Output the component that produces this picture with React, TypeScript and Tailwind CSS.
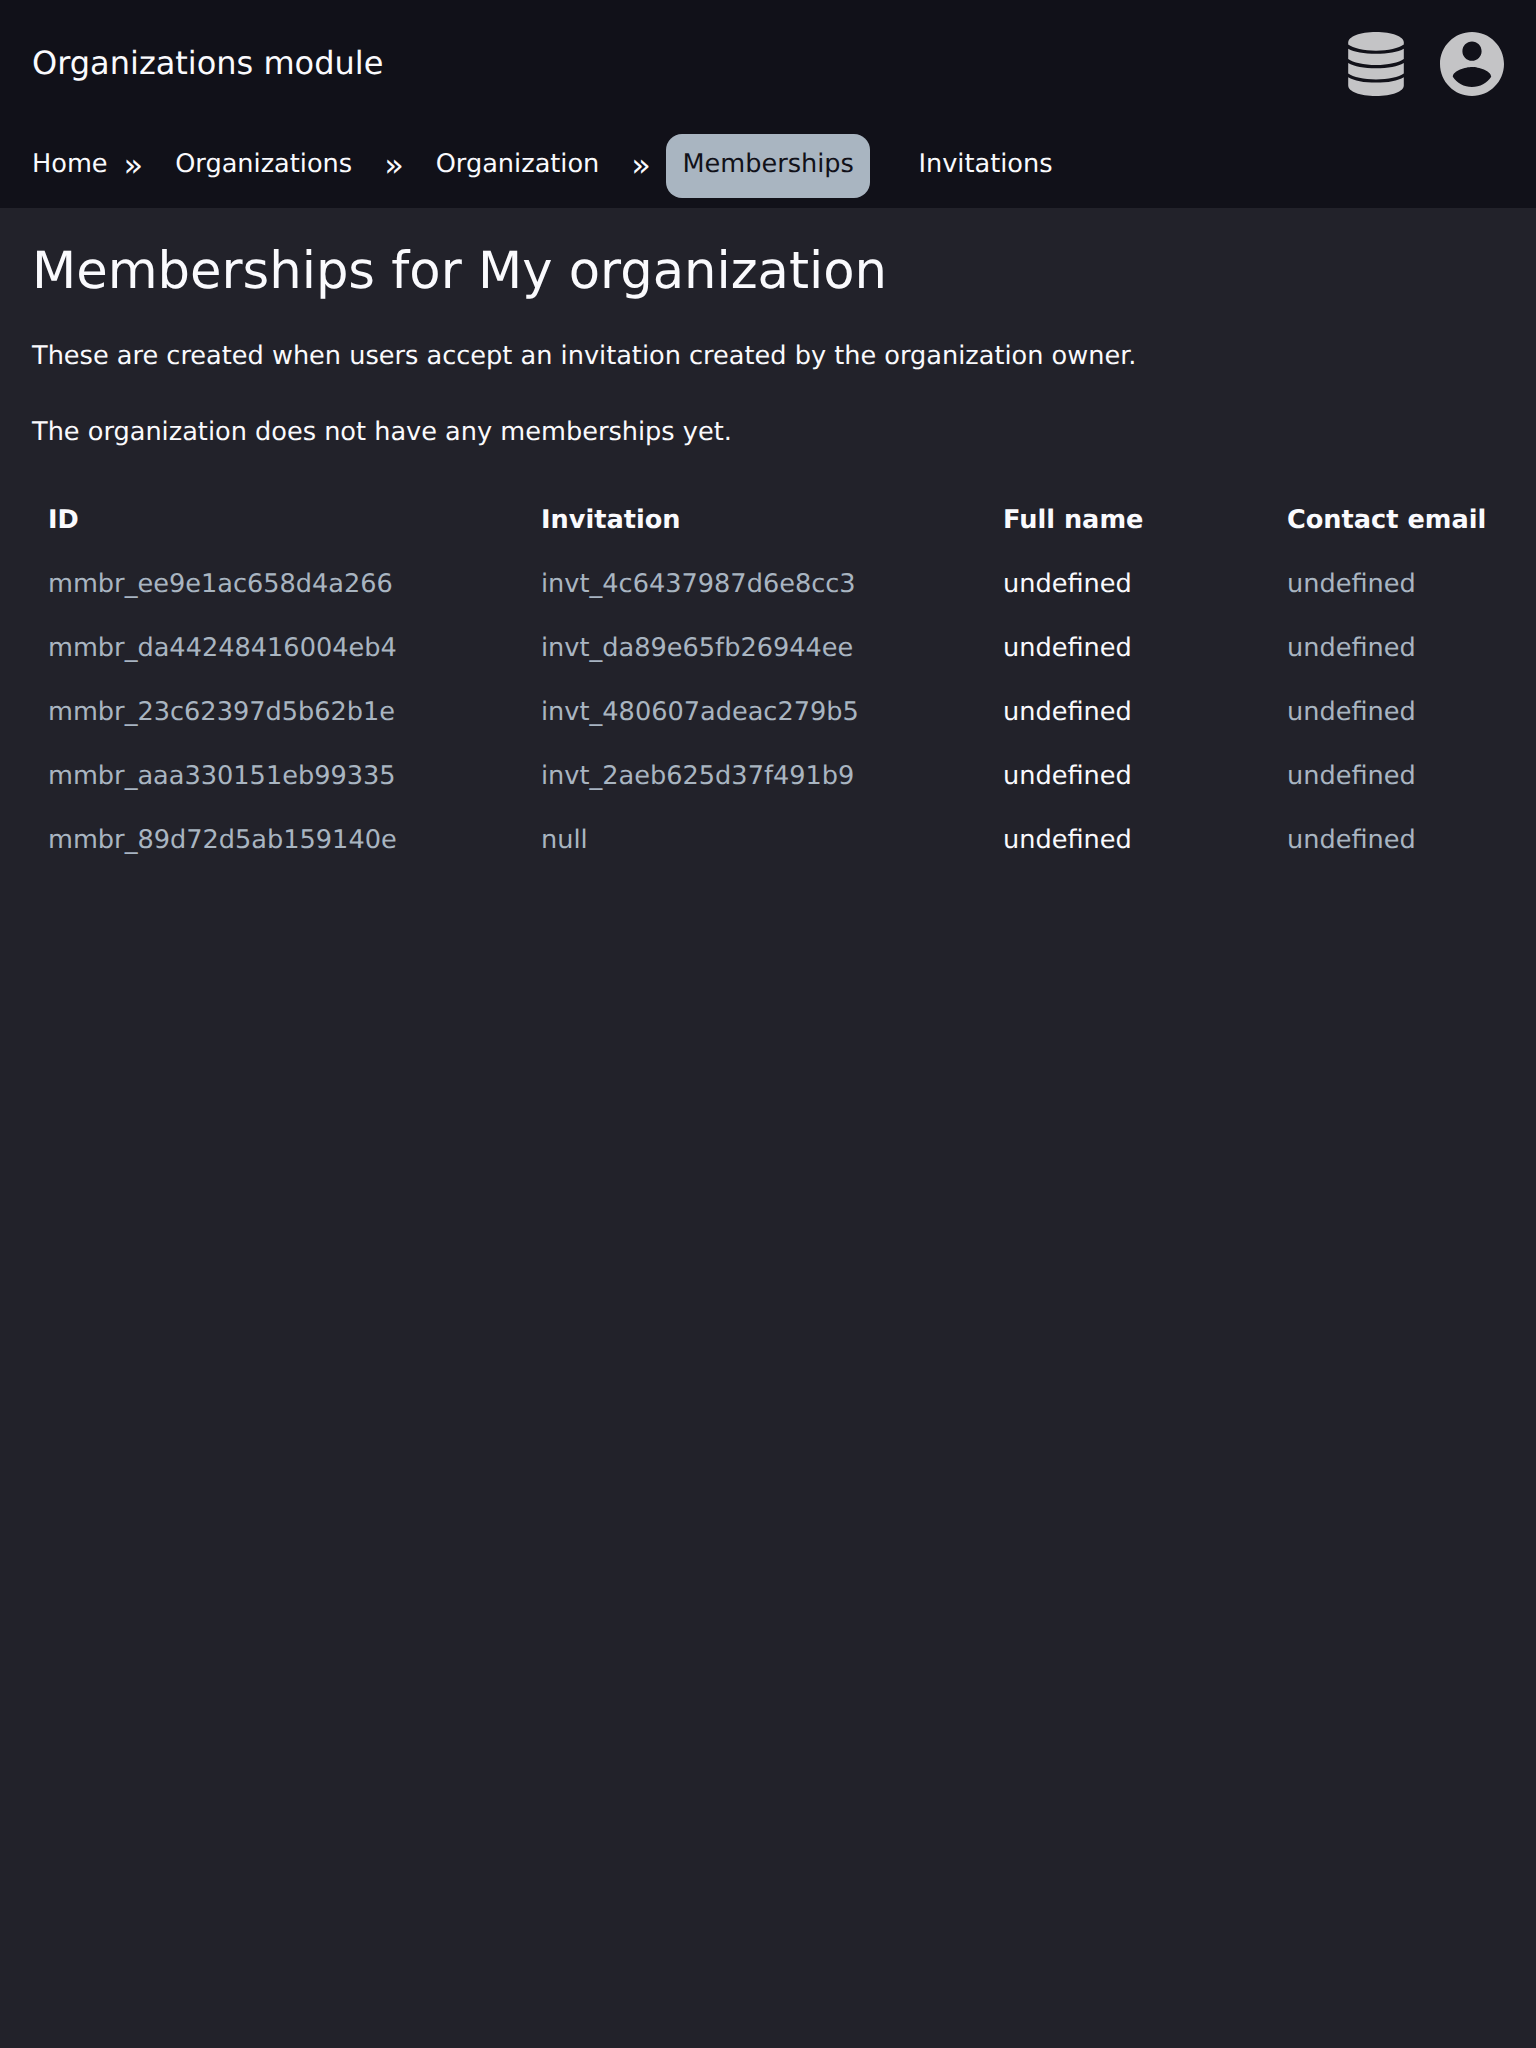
import React from "react";

const memberships = [
  { id: "mmbr_ee9e1ac658d4a266", invitation: "invt_4c6437987d6e8cc3" },
  { id: "mmbr_da44248416004eb4", invitation: "invt_da89e65fb26944ee" },
  { id: "mmbr_23c62397d5b62b1e", invitation: "invt_480607adeac279b5" },
  { id: "mmbr_aaa330151eb99335", invitation: "invt_2aeb625d37f491b9" },
  { id: "mmbr_89d72d5ab159140e", invitation: "null" },
];

function DatabaseIcon() {
  return (
    <svg className="h-16 w-14" viewBox="0 0 56 64" fill="currentColor">
      <path d="M0.200 10.500C0.200 4.500 12 0 28 0s27.800 4.500 27.800 10.500v2C51 16 40 18.700 28 18.700S5 16 0.200 12.500z" />
      <path d="M0.200 16.700C6 20 16 21.700 28 21.700S50 20 55.800 16.700V27C51 30.500 40 33 28 33S5 30.500 0.200 27z" />
      <path d="M0.200 31C6 34.500 16 36.300 28 36.300S50 34.500 55.800 31V41.500C51 45 40 47.400 28 47.400S5 45 0.200 41.500z" />
      <path d="M0.200 45.200C6 48.800 16 50.600 28 50.600S50 48.800 55.800 45.200V53.500C55.800 59.500 44 64 28 64S0.200 59.500 0.200 53.500z" />
    </svg>
  );
}

function AccountIcon() {
  return (
    <svg className="size-16" viewBox="2 2 20 20" fill="currentColor">
      <path d="M12 2C6.480 2 2 6.480 2 12s4.480 10 10 10 10-4.480 10-10S17.520 2 12 2zm0 3c1.660 0 3 1.340 3 3s-1.340 3-3 3-3-1.340-3-3 1.340-3 3-3zm0 14.200c-2.500 0-4.710-1.280-6-3.220.030-1.990 4-3.080 6-3.080 1.990 0 5.970 1.090 6 3.080-1.290 1.940-3.500 3.220-6 3.220z" />
    </svg>
  );
}

function Separator() {
  return <span className="pt-1 text-[32px] leading-[54px]">»</span>;
}

export default function App() {
  return (
    <div className="min-h-screen bg-[#22222a] font-['DejaVu_Sans',sans-serif] text-[25.6px] leading-[38px] text-[#fafafd] [text-rendering:geometricPrecision]">
      <header className="h-[208px] bg-[#111119]">
        <div className="flex h-32 items-center justify-between px-8">
          <span className="pb-0.5 text-[32px] leading-[48px]">Organizations module</span>
          <div className="flex gap-9 text-[#c4c4c6]">
            <DatabaseIcon />
            <AccountIcon />
          </div>
        </div>
        <nav className="flex items-start px-8 pt-1.5 leading-[61px]">
          <a className="mr-4">Home</a>
          <Separator />
          <a className="mx-4 px-4">Organizations</a>
          <Separator />
          <a className="mx-4 px-4">Organization</a>
          <Separator />
          <a className="mr-4 ml-[15.5px] h-16 rounded-2xl bg-[#a9b5c1] px-4 text-[#111119]">Memberships</a>
          <a className="ml-[16.5px] px-4">Invitations</a>
        </nav>
      </header>
      <main className="px-8 pt-[25px]">
        <h1 className="text-[51.2px] leading-[77px]">Memberships for My organization</h1>
        <p className="mt-[27px]">These are created when users accept an invitation created by the organization owner.</p>
        <p className="mt-[38px]">The organization does not have any memberships yet.</p>
        <table className="mt-[37px] w-full table-fixed text-left">
          <colgroup>
            <col className="w-[493px]" />
            <col className="w-[462px]" />
            <col className="w-[284px]" />
            <col />
          </colgroup>
          <thead>
            <tr className="h-16">
              <th className="px-4 font-bold">ID</th>
              <th className="px-4 font-bold">Invitation</th>
              <th className="px-4 font-bold">Full name</th>
              <th className="px-4 font-bold whitespace-nowrap">Contact email</th>
            </tr>
          </thead>
          <tbody>
            {memberships.map((m) => (
              <tr key={m.id} className="h-16">
                <td className="px-4 text-[#a9b5c1]">{m.id}</td>
                <td className="px-4 text-[#a9b5c1]">{m.invitation}</td>
                <td className="px-4">undefined</td>
                <td className="px-4 text-[#a9b5c1]">undefined</td>
              </tr>
            ))}
          </tbody>
        </table>
      </main>
    </div>
  );
}
